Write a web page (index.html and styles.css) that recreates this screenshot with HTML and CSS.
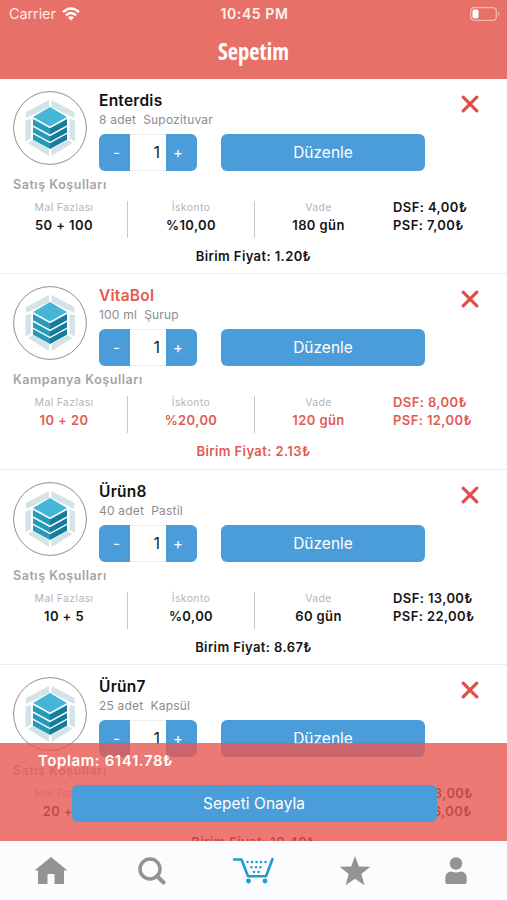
FILE: index.html
```html
<!DOCTYPE html>
<html lang="tr">
<head>
<meta charset="utf-8">
<title>Sepetim</title>
<link rel="stylesheet" href="styles.css">
</head>
<body>
<svg class="defs" aria-hidden="true">
  <symbol id="logo" viewBox="0 0 74 74">
    <circle cx="37" cy="37" r="36.4" fill="#fff" stroke="#8e8e90" stroke-width="1"/>
    <g fill="#d3e4e6">
      <path d="M36 9v7L13 27v-6z"/><path d="M38.500 9v7L61.500 27v-6z"/>
      <path d="M12.500 29.500l5.500-2v20l-5.500 3z"/><path d="M62 29.500l-5.500-2v20l5.500 3z"/>
      <path d="M15 52l5-3 16 9v7z"/><path d="M59.500 52l-5-3-16 9v7z"/>
    </g>
    <path d="M19 27l18-11L55 27v21.500L37 58.500 19 48.500z" fill="#fff"/>
    <path d="M20 26L37 16l17 10-17 9.500z" fill="#45b5d8"/>
    <path d="M20 28l17 9.300v6.200l-17-9.300zM20 36l17 9.300v5.400l-17-9.300zM20 43l17 9.300V58l-17-9.300z" fill="#269abb"/>
    <path d="M54 28l-17 9.300v6.200l17-9.300zM54 36l-17 9.300v5.400l17-9.300zM54 43l-17 9.300V58l17-9.300z" fill="#167c9c"/>
  </symbol>
  <symbol id="cross" viewBox="0 0 18 18"><path d="M2.200 2.200l13.600 13.600M15.800 2.200L2.200 15.800" stroke="#df4f49" stroke-width="3.200" stroke-linecap="round"/></symbol>
</svg>
<div class="app">
  <header class="header">
    <div class="status">
      <span class="carrier">Carrier
        <svg class="wifi" viewBox="0 0 18 14" fill="none" stroke="#fff" stroke-width="2.400"><path d="M1 5.200q8-7.400 16 0M4 8.400q5-4.600 10 0"/><path d="M9 13.500L6 10.500q3-2.400 6 0z" fill="#fff" stroke="none"/></svg>
      </span>
      <span class="time">10:45 PM</span>
      <svg class="battery" viewBox="0 0 30 14"><rect x=".7" y=".7" width="25.600" height="12.600" rx="3.500" fill="none" stroke="#f6b6b0" stroke-width="1.200"/><rect x="2.500" y="2.500" width="6" height="9" rx="1.800" fill="#fff"/><path d="M27.800 4.500q3.200 2.500 0 5z" fill="#f6b6b0"/></svg>
    </div>
    <h1 class="title">Sepetim</h1>
  </header>
  <main class="list">
    <article class="card">
      <div class="top">
        <svg class="logo"><use href="#logo"/></svg>
        <div class="product">
          <h2 class="name">Enterdis</h2><p class="form">8 adet&nbsp; Supozituvar</p>
          <div class="actions"><div class="stepper"><span class="minus">-</span><span class="qty">1</span><span class="plus">+</span></div><div class="edit">Düzenle</div></div>
        </div>
        <svg class="remove"><use href="#cross"/></svg>
      </div>
      <p class="terms">Satış Koşulları</p>
      <div class="grid">
        <div class="cell"><span class="label">Mal Fazlası</span><b>50 + 100</b></div>
        <div class="cell"><span class="label">İskonto</span><b>%10,00</b></div>
        <div class="cell"><span class="label">Vade</span><b>180 gün</b></div>
        <div class="prices"><b>DSF: 4,00₺</b><b>PSF: 7,00₺</b></div>
      </div>
      <p class="unit">Birim Fiyat: 1.20₺</p>
    </article>
    <article class="card campaign">
      <div class="top">
        <svg class="logo"><use href="#logo"/></svg>
        <div class="product">
          <h2 class="name">VitaBol</h2><p class="form">100 ml&nbsp; Şurup</p>
          <div class="actions"><div class="stepper"><span class="minus">-</span><span class="qty">1</span><span class="plus">+</span></div><div class="edit">Düzenle</div></div>
        </div>
        <svg class="remove"><use href="#cross"/></svg>
      </div>
      <p class="terms">Kampanya Koşulları</p>
      <div class="grid">
        <div class="cell"><span class="label">Mal Fazlası</span><b>10 + 20</b></div>
        <div class="cell"><span class="label">İskonto</span><b>%20,00</b></div>
        <div class="cell"><span class="label">Vade</span><b>120 gün</b></div>
        <div class="prices"><b>DSF: 8,00₺</b><b>PSF: 12,00₺</b></div>
      </div>
      <p class="unit">Birim Fiyat: 2.13₺</p>
    </article>
    <article class="card">
      <div class="top">
        <svg class="logo"><use href="#logo"/></svg>
        <div class="product">
          <h2 class="name">Ürün8</h2><p class="form">40 adet&nbsp; Pastil</p>
          <div class="actions"><div class="stepper"><span class="minus">-</span><span class="qty">1</span><span class="plus">+</span></div><div class="edit">Düzenle</div></div>
        </div>
        <svg class="remove"><use href="#cross"/></svg>
      </div>
      <p class="terms">Satış Koşulları</p>
      <div class="grid">
        <div class="cell"><span class="label">Mal Fazlası</span><b>10 + 5</b></div>
        <div class="cell"><span class="label">İskonto</span><b>%0,00</b></div>
        <div class="cell"><span class="label">Vade</span><b>60 gün</b></div>
        <div class="prices"><b>DSF: 13,00₺</b><b>PSF: 22,00₺</b></div>
      </div>
      <p class="unit">Birim Fiyat: 8.67₺</p>
    </article>
    <article class="card">
      <div class="top">
        <svg class="logo"><use href="#logo"/></svg>
        <div class="product">
          <h2 class="name">Ürün7</h2><p class="form">25 adet&nbsp; Kapsül</p>
          <div class="actions"><div class="stepper"><span class="minus">-</span><span class="qty">1</span><span class="plus">+</span></div><div class="edit">Düzenle</div></div>
        </div>
        <svg class="remove"><use href="#cross"/></svg>
      </div>
      <p class="terms">Satış Koşulları</p>
      <div class="grid">
        <div class="cell"><span class="label">Mal Fazlası</span><b>20 + 5</b></div>
        <div class="cell"><span class="label">İskonto</span><b>%0,00</b></div>
        <div class="cell"><span class="label">Vade</span><b>60 gün</b></div>
        <div class="prices"><b>DSF: 13,00₺</b><b>PSF: 16,00₺</b></div>
      </div>
      <p class="unit">Birim Fiyat: 10.40₺</p>
    </article>
  </main>
  <section class="summary">
    <p class="total">Toplam: 6141.78₺</p>
    <div class="confirm">Sepeti Onayla</div>
  </section>
  <nav class="tabs">
    <span><svg width="36" height="32" viewBox="0 0 36 32" fill="#929395"><path d="M18 2L34.500 15.500H31V29h-9.500V19h-7v10H5V15.500H1.500z"/></svg></span>
    <span><svg width="30" height="32" viewBox="0 0 30 32" fill="none" stroke="#929395"><circle cx="13" cy="14" r="10" stroke-width="3.500"/><path d="M20 21l6.500 6.500" stroke-width="4" stroke-linecap="round"/></svg></span>
    <span><svg width="42" height="32" viewBox="0 0 42 32"><path d="M2 4.500h7.500L16 21.300h18L40.500 4" fill="none" stroke="#219bd0" stroke-width="2.600" stroke-linecap="round" stroke-linejoin="round"/><path d="M15.500 7h19M19.500 12.300h11M22 17h6" fill="none" stroke="#219bd0" stroke-width="2.500" stroke-linecap="round" stroke-dasharray="0 4.500"/><circle cx="16.500" cy="26" r="2.400" fill="#219bd0"/><circle cx="33" cy="26" r="2.400" fill="#219bd0"/></svg></span>
    <span><svg width="32" height="32" viewBox="0 0 32 32" fill="#929395"><path d="M16 1l3.800 10.500 11.500.3-9 7.200 3.200 11.300L16 23.800l-9.500 6.500L9.700 19l-9-7.200 11.500-.3z"/></svg></span>
    <span><svg width="24" height="32" viewBox="0 0 24 32" fill="#929395"><circle cx="12" cy="8.500" r="6.200"/><path d="M1.300 27v-4q0-6 6-6.500 4.700 2 9.400 0 6 .5 6 6.500v4q0 2-2 2H3.300q-2 0-2-2z"/></svg></span>
  </nav>
</div>
</body>
</html>
```
FILE: styles.css
```css
* { box-sizing: border-box; margin: 0; padding: 0; }
body { width: 507px; height: 900px; overflow: hidden; font-family: Inter, "Liberation Sans", sans-serif; background: #fff; color: #151515; }
.defs { display: none; }
.app { position: relative; height: 900px; display: flex; flex-direction: column; overflow: hidden; }
.header { flex: none; height: 79px; background: #e77068; color: #fff; }
.status { height: 27px; display: grid; grid-template-columns: 1fr auto 1fr; align-items: center; padding: 0 7px 0 9px; font-size: 14.5px; }
.carrier { display: flex; align-items: center; gap: 6px; letter-spacing: -.1px; color: #ffe9e6; }
.wifi { width: 18px; height: 14px; }
.time { font-size: 14px; font-weight: 600; letter-spacing: .6px; color: #fff0ee; }
.battery { width: 30px; height: 14px; justify-self: end; }
.title { font: 700 22.5px/50px "Open Sans", sans-serif; font-stretch: 75%; text-align: center; }
.list { flex: 1; overflow: hidden; }
.card { height: 195.4px; padding-top: 12px; border-bottom: 1.5px solid #ececee; }
.top { display: flex; height: 86px; padding-left: 13px; }
.logo { width: 74px; height: 74px; flex: none; margin-right: 12px; }
.product { width: 326px; flex: none; }
.name { font-size: 15.5px; line-height: 20px; font-weight: 600; letter-spacing: .25px; color: #111; }
.form { font-size: 12px; line-height: 17px; letter-spacing: .2px; color: #8c8c8e; }
.actions { display: flex; justify-content: space-between; margin-top: 6px; }
.stepper { width: 98px; height: 37px; display: flex; border-radius: 6px; overflow: hidden; background: #4a9dd8; color: #fff; line-height: 37px; font-size: 15px; }
.minus { width: 31px; padding-left: 14px; }
.qty { width: 36px; background: #fff; color: #222; border: solid #eee; border-width: 1px 0; line-height: 35px; text-align: right; padding-right: 6px; font-size: 16px; }
.plus { width: 31px; padding-left: 7px; }
.edit { width: 204px; height: 37px; border-radius: 6px; background: #4a9dd8; color: #fff; text-align: center; font-size: 15.5px; line-height: 37px; letter-spacing: 0; }
.remove { width: 18px; height: 18px; margin: 4px 0 0 36px; }
.terms { padding-left: 13px; font-size: 12.5px; line-height: 16px; font-weight: 600; letter-spacing: .55px; color: #a5a5a7; }
.grid { display: flex; height: 37px; margin-top: 8px; padding-left: 1px; font-size: 13px; }
.cell { width: 127px; border-right: 1.5px solid #c8c8ca; text-align: center; display: flex; flex-direction: column; }
.cell:nth-child(3) { border: 0; }
.label { font-size: 10.5px; line-height: 14px; letter-spacing: .35px; color: #b5b5b7; }
.grid b { font-weight: 600; line-height: 21px; letter-spacing: .4px; }
.prices { display: flex; flex-direction: column; padding-left: 11px; margin-top: -3px; }
.prices b { line-height: 18px; }
.unit { margin-top: 10px; font-size: 13px; line-height: 16px; font-weight: 600; letter-spacing: .4px; text-align: center; }
.campaign .name, .campaign b, .campaign .unit { color: #e35a53; }
.summary { position: absolute; left: 0; right: 0; bottom: 59px; height: 98.5px; background: rgba(232, 88, 81, .8); color: #fff; }
.total { padding: 8px 0 0 38px; font-size: 15px; line-height: 20px; font-weight: 600; letter-spacing: .6px; }
.confirm { width: 365px; height: 37px; margin: 14.5px 0 0 71.5px; border-radius: 6px; background: #4a9dd8; text-align: center; font-size: 15.5px; line-height: 37px; letter-spacing: .05px; }
.tabs { flex: none; height: 59px; display: grid; grid-template-columns: repeat(5, 1fr); background: #fbfcfe; }
.tabs span { display: flex; justify-content: center; padding-top: 14px; }
```
